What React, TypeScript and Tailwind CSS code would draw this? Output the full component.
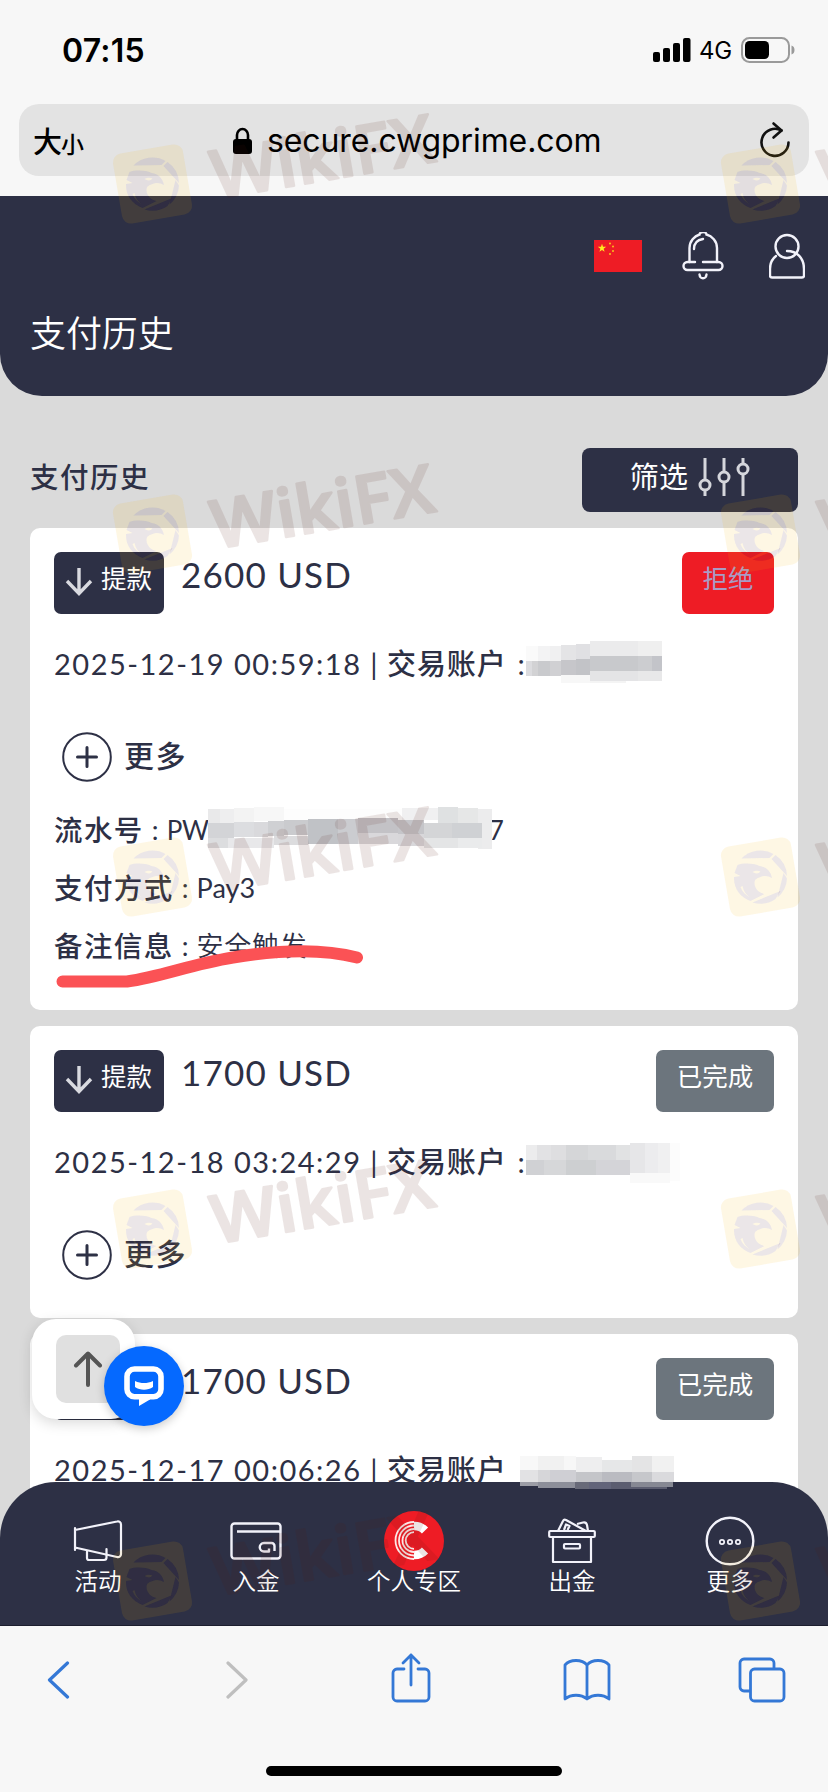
import { memo } from "react";
import type { ReactNode } from "react";

type Block = [x: number, y: number, w: number, h: number, fill: string];

interface Payment {
  id: string;
  amount: string;
  date: string;
  status: "rejected" | "done";
  accountMask: Block[];
  colon: boolean;
  expanded?: boolean;
}

const PAYMENTS: Payment[] = [
  {
    id: "p1",
    amount: "2600 USD",
    date: "2025-12-19 00:59:18",
    status: "rejected",
    colon: true,
    expanded: true,
    accountMask: [
      [0, 5, 12, 15, "#fafafa"],
      [0, 20, 6, 15, "#dcdcdf"],
      [6, 20, 6, 15, "#d2d2d4"],
      [12, 5, 12, 15, "#f3f3f4"],
      [12, 20, 12, 15, "#c9cacd"],
      [24, 5, 11, 15, "#f0f0f1"],
      [24, 20, 11, 15, "#d0d0d3"],
      [35, 4, 15, 15, "#e4e4e6"],
      [35, 19, 15, 15, "#c6c6ca"],
      [35, 34, 29, 8, "#f7f7f7"],
      [50, 3, 14, 15, "#e0e0e3"],
      [50, 18, 14, 16, "#c2c3c7"],
      [64, 0, 48, 15, "#ebebec"],
      [64, 15, 48, 15, "#c8c9cc"],
      [64, 30, 48, 10, "#e4e4e6"],
      [64, 40, 36, 2, "#f4f4f4"],
      [112, 0, 24, 15, "#efefef"],
      [112, 15, 14, 15, "#cccdd0"],
      [126, 15, 10, 15, "#c3c4c9"],
      [112, 30, 24, 10, "#e8e8e9"],
    ],
  },
  {
    id: "p2",
    amount: "1700 USD",
    date: "2025-12-18 03:24:29",
    status: "done",
    colon: true,
    accountMask: [
      [0, 6, 11, 15, "#ececed"],
      [11, 6, 14, 15, "#e2e2e4"],
      [25, 6, 15, 15, "#dedee0"],
      [40, 6, 22, 15, "#d5d6d8"],
      [62, 6, 28, 15, "#d9dadc"],
      [90, 6, 14, 15, "#e1e2e3"],
      [0, 21, 18, 15, "#d0d1d4"],
      [18, 21, 22, 15, "#d6d7d9"],
      [40, 21, 30, 15, "#cdcfd1"],
      [70, 21, 34, 15, "#d4d4d8"],
      [104, 4, 15, 30, "#e6e6e8"],
      [119, 4, 13, 30, "#ececee"],
      [132, 4, 12, 30, "#f0f0f1"],
      [104, 34, 40, 10, "#f9f9f9"],
      [144, 4, 10, 38, "#fcfcfc"],
    ],
  },
  {
    id: "p3",
    amount: "1700 USD",
    date: "2025-12-17 00:06:26",
    status: "done",
    colon: false,
    accountMask: [
      [-6, 9, 18, 14, "#f8f8f8"],
      [12, 9, 26, 14, "#f1f1f1"],
      [38, 9, 12, 14, "#f7f7f7"],
      [-6, 23, 18, 13, "#e2e2e4"],
      [12, 23, 12, 13, "#d6d6d9"],
      [24, 23, 26, 13, "#cfcfd4"],
      [-6, 36, 10, 10, "#b2b2b9"],
      [4, 36, 14, 12, "#a3a4ac"],
      [18, 36, 32, 14, "#9799a2"],
      [50, 10, 26, 15, "#eeeeef"],
      [76, 13, 30, 12, "#e6e7e8"],
      [50, 25, 26, 15, "#c4c5c9"],
      [76, 25, 30, 15, "#babbc1"],
      [50, 40, 14, 10, "#686a79"],
      [64, 40, 22, 10, "#62647a"],
      [86, 40, 20, 10, "#5b5d70"],
      [106, 9, 20, 16, "#e4e4e5"],
      [126, 9, 22, 16, "#f1f1f1"],
      [106, 25, 20, 14, "#c6c7cb"],
      [126, 25, 22, 14, "#dadadd"],
      [106, 39, 42, 10, "#8b8d98"],
    ],
  },
];

// rows that fall below the top edge of the bottom nav
const NAV_MASK: Block[] = [
  [0, 0, 18, 4, "#9c9da6"],
  [18, 0, 37, 6, "#8d8f9a"],
  [55, 0, 14, 7, "#686a79"],
  [69, 0, 22, 7, "#62647a"],
  [91, 0, 20, 7, "#5b5d70"],
  [111, 0, 42, 5, "#868893"],
  [111, 5, 36, 2, "#5b5d70"],
];

const SERIAL_MASK: Block[] = [
  [0, 2, 12, 14, "#e9e9ea"],
  [12, 2, 14, 14, "#eeeeef"],
  [26, 1, 20, 14, "#f3f3f3"],
  [46, 0, 30, 14, "#f7f7f7"],
  [76, 2, 118, 11, "#fdfdfd"],
  [0, 16, 26, 15, "#d3d4d7"],
  [26, 15, 20, 15, "#dcdde0"],
  [46, 15, 14, 15, "#d9d9dc"],
  [60, 14, 16, 15, "#cfd0d3"],
  [76, 13, 24, 15, "#cacbce"],
  [100, 12, 30, 25, "#c0c2c6"],
  [130, 12, 20, 25, "#cbccd0"],
  [150, 11, 40, 15, "#c3c2c6"],
  [190, 13, 26, 14, "#c5c5c9"],
  [0, 31, 20, 10, "#dcdddf"],
  [20, 31, 46, 10, "#e8e8ea"],
  [66, 29, 34, 9, "#dcdcde"],
  [150, 26, 40, 11, "#d9d8db"],
  [190, 27, 26, 12, "#d8d7da"],
  [194, 1, 36, 12, "#f0f0f1"],
  [230, 0, 20, 16, "#dfe1e2"],
  [250, 1, 20, 15, "#e6e7e7"],
  [270, 2, 14, 40, "#ececed"],
  [216, 16, 28, 15, "#d4d5d7"],
  [244, 16, 30, 15, "#cfd1d4"],
  [216, 31, 34, 10, "#e4e5e6"],
  [250, 31, 24, 10, "#eaebec"],
];

const WATERMARK_ROWS = [184, 534, 877, 1229, 1581];

function Mosaic({ blocks, className }: { blocks: Block[]; className: string }) {
  return (
    <svg className={`absolute overflow-visible ${className}`} width="10" height="10" shapeRendering="crispEdges">
      {blocks.map(([x, y, w, h, fill], i) => (
        <rect key={i} x={x} y={y} width={w} height={h} fill={fill} />
      ))}
    </svg>
  );
}

function StatusBar() {
  return (
    <div className="flex h-[100px] items-center justify-between pl-[62px] pr-[33px]">
      <span className="mt-0.5 font-['Inter'] text-[32px] font-semibold leading-none tracking-[0.200px]">07:15</span>
      <div className="flex items-center">
        <svg width="38" height="24" viewBox="0 0 38 24">
          <rect x="0" y="14" width="7" height="10" rx="2" />
          <rect x="10" y="10" width="7" height="14" rx="2" />
          <rect x="20" y="5" width="7" height="19" rx="2" />
          <rect x="30" y="0" width="7.5" height="24" rx="2" />
        </svg>
        <span className="ml-2 mt-0.5 w-[33px] font-['Inter'] text-[24px] leading-none tracking-[-0.3px]">4G</span>
        <svg className="ml-[9px]" width="54" height="26" viewBox="0 0 54 26" fill="none">
          <rect x="1" y="1" width="47" height="24" rx="7.5" stroke="#9a9a9a" strokeWidth="2" />
          <rect x="4" y="4" width="24" height="18" rx="4.5" fill="#000" />
          <path d="M50.5 8.500c2 .6 3 2.200 3 4.500s-1 3.900-3 4.500z" fill="#9a9a9a" />
        </svg>
      </div>
    </div>
  );
}

function AddressBar() {
  return (
    <div className="mx-[19px] mt-1 flex h-[72px] items-center rounded-[20px] bg-[#e3e3e3] pl-3.5 pr-[18px]">
      <div className="flex w-[199px] items-baseline font-['Noto_Sans_CJK_SC',sans-serif] font-medium leading-none">
        <span className="text-[29px]">大</span>
        <span className="-ml-px text-[23px]">小</span>
      </div>
      <svg width="21" height="27" viewBox="0 0 21 27">
        <rect x="1" y="12" width="19" height="15" rx="3" />
        <path d="M5 13V8a5.500 6 0 0 1 11 0v5" fill="none" stroke="#000" strokeWidth="2.600" />
      </svg>
      <span className="ml-[14px] mt-0.5 flex-1 whitespace-nowrap font-['Inter'] text-[32px] leading-none tracking-[-0.1px]">
        secure.cwgprime.com
      </span>
      <svg width="32" height="38" viewBox="0 0 32 38" fill="none" stroke="#111" strokeWidth="2.600" strokeLinecap="round" strokeLinejoin="round">
        <path d="M22.500 9.500A13.500 13.500 0 1 0 29.500 21.500" />
        <path d="M14.500 2.500l8 7-8 7" />
      </svg>
    </div>
  );
}

function Flag() {
  return (
    <svg width="48" height="32" viewBox="0 0 48 32">
      <rect width="48" height="32" fill="#ee1c25" />
      <path d="M8 3.800l1 3h3.200l-2.600 1.900 1 3L8 9.900l-2.600 1.800 1-3L3.800 6.800H7z" fill="#ffec1f" />
      <g fill="#f9c01c">
        <circle cx="16" cy="3.500" r="1" />
        <circle cx="19" cy="6.500" r="1" />
        <circle cx="19" cy="11" r="1" />
        <circle cx="16" cy="14" r="1" />
      </g>
    </svg>
  );
}

function PageHeader() {
  return (
    <header className="h-[200px] rounded-b-[42px] bg-[#2d3045] text-white">
      <div className="flex items-center pl-[594px] pt-[36px]">
        <Flag />
        <svg className="ml-10" width="42" height="48" viewBox="0 0 42 48" fill="none" stroke="#f2f2fa" strokeWidth="2.400" strokeLinecap="round">
          <path d="M7.500 30V16c0-7 5-12 10-13.500a3.500 2.500 0 0 1 7 0C30 4 35 9 35 16v14M12 17c0-5 3-9 9-10" />
          <path d="M13 30H5.500a4 4 0 0 0 0 8h31a4 4 0 0 0 0-8H21" />
          <path d="M17.500 42.500c.5 5 6.500 5 7 0" />
        </svg>
        <svg className="ml-[45px]" width="36" height="48" viewBox="0 0 36 48" fill="none" stroke="#f2f2fa" strokeWidth="2.400" strokeLinecap="round">
          <circle cx="18" cy="14.500" r="11.500" />
          <path d="M7 24c-4 3-6 8-6 13v6.500a2 2 0 0 0 2 2h30a2 2 0 0 0 2-2V37c0-11-7-18-17-18" />
        </svg>
      </div>
      <h1 className="mt-[27px] pl-[30px] text-[36px] font-[350] leading-[52px] tracking-[-0.1px]">支付历史</h1>
    </header>
  );
}

function FilterIcon() {
  return (
    <svg width="52" height="40" viewBox="0 0 52 40" fill="none" stroke="#d5d6dc" strokeWidth="3">
      <path d="M7 1v22M7 33v6M26 1v14M26 25v14M45 1v6M45 17v22" />
      <circle cx="7" cy="28" r="5" />
      <circle cx="26" cy="20" r="5" />
      <circle cx="45" cy="12" r="5" />
    </svg>
  );
}

function DetailRow({ label, children }: { label: string; children: ReactNode }) {
  return (
    <div className="relative flex h-[58px] items-center whitespace-pre text-[27px]">
      <span className="text-[28.500px] font-medium tracking-[1.400px]">{label}</span>
      <span className="w-[23px] text-center">:</span>
      {children}
    </div>
  );
}

function PaymentCard({ payment }: { payment: Payment }) {
  return (
    <article className={`relative rounded-[10px] bg-white px-6 pt-6 ${payment.expanded ? "h-[482px]" : "h-[292px]"}`}>
      <div className="flex h-[62px] justify-between">
        <div className="flex">
          <span className="flex w-[110px] rounded-[7px] bg-[#2d3045] pl-[11px] text-white">
            <svg className="mt-[15px]" width="28" height="30" viewBox="0 0 28 30" fill="none" stroke="#d9dae0" strokeWidth="3.400">
              <path d="M14 1v26M2 14l12 12.500L26 14" />
            </svg>
            <span className="ml-2 mt-2 text-[25.500px] leading-[36px]">提款</span>
          </span>
          <span className="ml-[17px] whitespace-nowrap text-[35px] leading-[45px] tracking-[1.200px]">{payment.amount}</span>
        </div>
        {payment.status === "rejected" ? (
          <span className="h-full w-[92px] rounded-[7px] bg-[#ee1c25] pt-2 text-center text-[25.500px] leading-[36px] text-[#a99bc4]">
            拒绝
          </span>
        ) : (
          <span className="h-full w-[118px] rounded-[7px] bg-[#6c757d] pt-2 text-center text-[25.500px] leading-[36px] text-white">
            已完成
          </span>
        )}
      </div>

      <div className="relative mt-[30px] flex h-10 items-center whitespace-pre text-[29px]">
        <span className="w-[308px] tracking-[1.500px]">{payment.date}</span>
        <span className="w-[24px] text-center">|</span>
        <span className="ml-px font-medium tracking-[0.900px]">交易账户</span>
        {payment.colon && <span className="ml-[11px]">:</span>}
        <Mosaic blocks={payment.accountMask} className="left-[472px] top-[-3px]" />
      </div>

      <div className="mt-12 flex h-[50px] items-center pl-2">
        <svg width="50" height="50" viewBox="0 0 50 50" fill="none" stroke="#2d3045">
          <circle cx="25" cy="25" r="23.800" strokeWidth="2" />
          <path d="M25 15.500v19M15.500 25h19" strokeWidth="3" strokeLinecap="round" />
        </svg>
        <span className="-mt-1 ml-[12px] text-[30px] font-medium tracking-[1.500px]">更多</span>
      </div>

      {payment.expanded && (
        <div className="relative mt-[19px]">
          <DetailRow label="流水号">
            <span className="w-[42px] text-[26px] tracking-[-0.3px]">PW</span>
            <span className="ml-[280px] text-[26px]">7</span>
            <Mosaic blocks={SERIAL_MASK} className="left-[154px] top-[6px]" />
          </DetailRow>
          <DetailRow label="支付方式">
            <span>Pay3</span>
          </DetailRow>
          <DetailRow label="备注信息">
            <span className="font-[350] tracking-[0.7px]">安全触发</span>
          </DetailRow>
          <svg className="absolute left-0 top-[140px]" width="320" height="50" viewBox="0 0 320 50" fill="none">
            <path
              d="M8.500 40.500H73c35-5 63-17 106-24 48-8 90-9 124 0"
              stroke="#fb5255"
              strokeWidth="12"
              strokeLinecap="round"
            />
          </svg>
        </div>
      )}
    </article>
  );
}

function FloatingButtons() {
  return (
    <>
      <div className="absolute left-8 top-[1123px] h-[100px] w-[103px] rounded-[24px] bg-white pl-6 pt-4 shadow-[0_4px_14px_rgba(0,0,0,0.15)]">
        <div className="flex h-[68px] w-16 items-center justify-center rounded-[10px] bg-[#e0e0e0]">
          <svg width="30" height="36" viewBox="0 0 30 36" fill="none" stroke="#555" strokeWidth="4" strokeLinecap="round" strokeLinejoin="round">
            <path d="M15 34V3M3 14.500L15 2.500l12 12" />
          </svg>
        </div>
      </div>
      <div className="absolute left-[104px] top-[1150px] flex size-20 items-center justify-center rounded-full bg-[#0569ff] shadow-[0_3px_10px_rgba(0,0,0,0.2)]">
        <svg width="40" height="40" viewBox="0 0 40 40" fill="none">
          <path
            d="M18 30.800H10.500A7.500 7.500 0 0 1 3 23.300V10.500A7.500 7.500 0 0 1 10.500 3h19A7.500 7.500 0 0 1 37 10.500v12.800a7.500 7.500 0 0 1-7.500 7.500H23"
            stroke="#fff"
            strokeWidth="5.600"
          />
          <path d="M15 28h12l-1 5.600-11 6.400z" fill="#fff" />
          <path d="M11 15c6 2.800 12 2.800 18 0v6c-5 3.500-13 3.500-18 0z" fill="#fff" />
        </svg>
      </div>
    </>
  );
}

function NavItem({ label, children }: { label: string; children: ReactNode }) {
  return (
    <div className="flex w-[158px] flex-col items-center pt-[27px]">
      <div className="flex h-[64px] items-center">{children}</div>
      <span className="-mt-[9px] text-[23.500px] font-[350] leading-[34px]">{label}</span>
    </div>
  );
}

function BottomNav() {
  return (
    <nav className="absolute inset-x-0 bottom-0 flex h-[144px] justify-center rounded-t-[56px] border-b border-[#1c1e2e] bg-[#2d3045] text-white">
      <NavItem label="活动">
        <svg width="50" height="44" viewBox="0 0 50 44" fill="none" stroke="#f2f2fa" strokeWidth="2.200" strokeLinecap="round" strokeLinejoin="round">
          <path d="M2 9v22M2 11L44 2.500c2-.5 4 .5 4 3V35c0 2.500-2 3.500-4 3L2 28.500" />
          <path d="M14 32.500V39a2 2 0 0 0 2 2h15a2.500 2.500 0 0 0 2.500-2.500V30" />
        </svg>
      </NavItem>
      <NavItem label="入金">
        <svg width="52" height="38" viewBox="0 0 52 38" fill="none" stroke="#f2f2fa" strokeWidth="2.400" strokeLinejoin="round">
          <rect x="1.500" y="1.500" width="49" height="35" rx="3" />
          <path d="M7 9.500h43M44.500 29V24a3 3 0 0 0-3-3H34a4 4 0 0 0 0 8.500h5v-3" />
        </svg>
      </NavItem>
      <NavItem label="个人专区">
        <svg width="60" height="62" viewBox="0 0 60 62">
          <circle cx="30" cy="31" r="30" fill="#ee1c25" />
          <g fill="none" stroke="#fde8e6">
            <path d="M30 12a18.500 18.500 0 0 0 0 37M30 15.500a15 15 0 0 0 0 30M30 19a11.500 11.500 0 0 0 0 23" strokeWidth="1.800" />
            <path d="M30 22.200a8.300 8.300 0 0 0 0 16.600" strokeWidth="1.800" />
            <path d="M30 16a14.500 14.500 0 0 1 11 4.500M30 45a14.500 14.500 0 0 0 11-4.500" stroke="#fff" strokeWidth="8.500" />
          </g>
        </svg>
      </NavItem>
      <NavItem label="出金">
        <svg width="48" height="46" viewBox="0 0 48 46" fill="none" stroke="#f2f2fa" strokeWidth="2.200" strokeLinejoin="round">
          <rect x="1.200" y="13" width="45.600" height="6" rx="1" />
          <path d="M5 19v25h38V19" />
          <rect x="16" y="26" width="16" height="4.500" rx="1" />
          <path d="M10 13l5-10c.6-1.300 1.800-1.500 3-1l20 11M29 6l6-1.500c2-.4 3.500.5 4 2.500l1 6M16 12l2-5.500 3.500 1.500-2 4" />
        </svg>
      </NavItem>
      <NavItem label="更多">
        <svg width="50" height="50" viewBox="0 0 50 50" fill="none" stroke="#f2f2fa" strokeWidth="2.400">
          <circle cx="25" cy="25" r="23.300" />
          <g strokeWidth="1.700">
            <circle cx="17" cy="26" r="2.200" />
            <circle cx="25" cy="26" r="2.200" />
            <circle cx="33" cy="26" r="2.200" />
          </g>
        </svg>
      </NavItem>
      <Mosaic blocks={NAV_MASK} className="left-[520px] top-0" />
    </nav>
  );
}

function SafariToolbar() {
  return (
    <footer className="flex h-[166px] flex-col justify-between pb-4 pt-[27px]">
      <div className="flex h-[54px] items-center pl-[47px]">
        <svg width="23" height="38" viewBox="0 0 23 38" fill="none" stroke="#3478d6" strokeWidth="3.200" strokeLinecap="round" strokeLinejoin="round">
          <path d="M20.500 2L2.500 19l18 17" />
        </svg>
        <svg className="ml-[156px]" width="23" height="38" viewBox="0 0 23 38" fill="none" stroke="#bfbfbf" strokeWidth="3.200" strokeLinecap="round" strokeLinejoin="round">
          <path d="M2 2l18 17L2 36" />
        </svg>
        <svg className="-mt-1 ml-[142px]" width="40" height="50" viewBox="0 0 40 50" fill="none" stroke="#3478d6" strokeWidth="2.800" strokeLinecap="round" strokeLinejoin="round">
          <path d="M13 16H6a4 4 0 0 0-4 4v24a4 4 0 0 0 4 4h28a4 4 0 0 0 4-4V20a4 4 0 0 0-4-4h-7M20 32V2M12 10l8-8 8 8" />
        </svg>
        <svg className="ml-[132px]" width="48" height="42" viewBox="0 0 48 42" fill="none" stroke="#3478d6" strokeWidth="2.800" strokeLinejoin="round">
          <path d="M24 6v34M24 6C19 0 7 0 2 6v34c6-5 16-5 22 0 6-5 16-5 22 0V6C41 0 29 0 24 6z" />
        </svg>
        <svg className="ml-[127px]" width="48" height="46" viewBox="0 0 48 46" fill="none" stroke="#3478d6" strokeWidth="2.800" strokeLinejoin="round">
          <path d="M12 34H6a4 4 0 0 1-4-4V6a4 4 0 0 1 4-4h26a4 4 0 0 1 4 4v6" />
          <rect x="12.500" y="12" width="33.500" height="32" rx="4" />
        </svg>
      </div>
      <div className="mx-auto h-2.5 w-[296px] rounded-full bg-black" />
    </footer>
  );
}

function WatermarkTile({ x, y }: { x: number; y: number }) {
  return (
    <g transform={`translate(${x} ${y})`}>
      <rect x="-35.500" y="-35.500" width="71" height="71" rx="9" transform="rotate(-9.700)" fill="rgb(250,175,0)" fillOpacity="0.105" mask="url(#logo-cut)" />
      <use href="#logo-mark" fill="rgb(70,25,50)" fillOpacity="0.11" />
      <text
        transform="translate(63 15) rotate(-9.700)"
        className="font-['Open_Sans'] text-[67px] font-semibold"
        textLength="225"
        lengthAdjust="spacingAndGlyphs"
        fill="rgb(85,25,15)"
        stroke="rgb(85,25,15)"
        strokeWidth="2.500"
        strokeLinejoin="round"
        opacity="0.11"
      >
        WikiFX
      </text>
    </g>
  );
}

function Watermark() {
  return (
    <svg className="pointer-events-none absolute inset-0" width="828" height="1792" viewBox="0 0 828 1792">
      <defs>
        <g id="logo-mark">
          <path d="M-19-18.500A26.500 26.500 0 0 1 13-23L9-19z" />
          <path d="M15-22A26.500 26.500 0 0 1 26.500-1L11-18z" />
          <path d="M26.500 1.500A26.500 26.500 0 0 1 17 20.500L23-4z" />
          <path d="M15 22A26.500 26.500 0 0 1-8 25.500L20 14z" />
          <path
            fillRule="evenodd"
            d="M-23-12C-17-14-8-14-1-11 6-10 10-6 11.500 1 8-1 4-2 0 0-3 1-6 2-6 6-6 12-1 16 4 17L-10 24C-20 20-27 12-26.500 0L-20-1-26-4zM-8-5c3 2 6 2 8-.5-2-1-5-1.500-8 .5zM-20 10c2 5 5 8 9 10-4-3-6-6-7-11z"
          />
        </g>
        <mask id="logo-cut" x="-40" y="-40" width="80" height="80" maskUnits="userSpaceOnUse">
          <rect x="-40" y="-40" width="80" height="80" fill="#fff" />
          <use href="#logo-mark" fill="#000" transform="rotate(9.700)" />
        </mask>
      </defs>
      {WATERMARK_ROWS.map((y) => (
        <g key={y}>
          <WatermarkTile x={152.5} y={y} />
          <WatermarkTile x={760.5} y={y} />
        </g>
      ))}
    </svg>
  );
}

function App() {
  return (
    <div className="relative flex h-[1792px] w-[828px] flex-col overflow-hidden bg-[#f7f7f7] font-['Lato','Noto_Sans_CJK_SC',sans-serif] text-black">
      <div className="h-[196px]">
        <StatusBar />
        <AddressBar />
      </div>
      <main className="relative h-[1430px] overflow-hidden bg-[#dadada] text-[#2d3045]">
        <PageHeader />
        <div className="mt-[52px] flex h-16 items-center justify-between px-[30px]">
          <h2 className="-mt-1.5 text-[28.500px] font-medium tracking-[1.500px]">支付历史</h2>
          <button className="flex h-16 w-[216px] justify-center rounded-lg bg-[#2d3045] pt-2 text-white">
            <span className="text-[29px] leading-[42px] tracking-[0.300px]">筛选</span>
            <span className="ml-[10px] mt-px">
              <FilterIcon />
            </span>
          </button>
        </div>
        <div className="mt-4 flex flex-col gap-4 px-[30px]">
          {PAYMENTS.map((p) => (
            <PaymentCard key={p.id} payment={p} />
          ))}
        </div>
        <FloatingButtons />
        <BottomNav />
      </main>
      <SafariToolbar />
      <Watermark />
    </div>
  );
}

export default memo(App);
